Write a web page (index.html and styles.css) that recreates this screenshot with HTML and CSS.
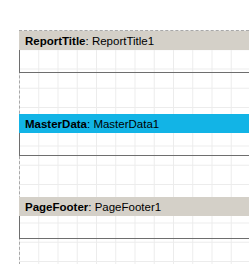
FILE: index.html
```html
<!DOCTYPE html>
<html lang="en">
<head>
<meta charset="UTF-8" />
<title>Report Designer</title>
<link rel="stylesheet" href="styles.css">
</head>
<body>
  <div class="page" aria-label="Report page">
    <section class="band">
      <div class="caption caption-title"><b>ReportTitle</b>: ReportTitle1</div>
      <div class="band-body"></div>
    </section>

    <section class="band">
      <div class="caption caption-data"><b>MasterData</b>: MasterData1</div>
      <div class="band-body"></div>
    </section>

    <section class="band">
      <div class="caption caption-footer"><b>PageFooter</b>: PageFooter1</div>
      <div class="band-body"></div>
    </section>
  </div>
</body>
</html>
```

FILE: styles.css
```css
/* Reset */
*, *:before, *:after {
  box-sizing: border-box;
}

body {
  margin: 0;
  background: #fff;
  font-family: 'Liberation Sans', Tahoma, Arial, sans-serif;
  font-size: 11.5px;
  color: #000;
  overflow: hidden;
}

/* design surface with grid */
.page {
  margin: 30px 0 0 19px;
  height: 240px;
  border-top: 1px dashed #a8a8a8;
  border-left: 1px dashed #a8a8a8;
  background-image:
    linear-gradient(to right, #ececec 1px, transparent 1px),
    linear-gradient(to bottom, #ececec 1px, transparent 1px);
  background-size: 19.25px 19.25px;
  background-position: -1px -1px;
  display: flex;
  flex-direction: column;
  gap: 41px;
}

.band {
  margin-left: -1px;
}

.caption {
  height: 19px;
  line-height: 20px;
  padding-left: 6px;
  white-space: nowrap;
}

.caption b {
  font-weight: 700;
}

.caption-title,
.caption-footer {
  background: #d4d0c8;
}

.caption-data {
  background: #12b4e6;
}

.band-body {
  height: 23px;
  border-left: 1px solid #6e6e6e;
  border-bottom: 1px solid #6e6e6e;
}
```
